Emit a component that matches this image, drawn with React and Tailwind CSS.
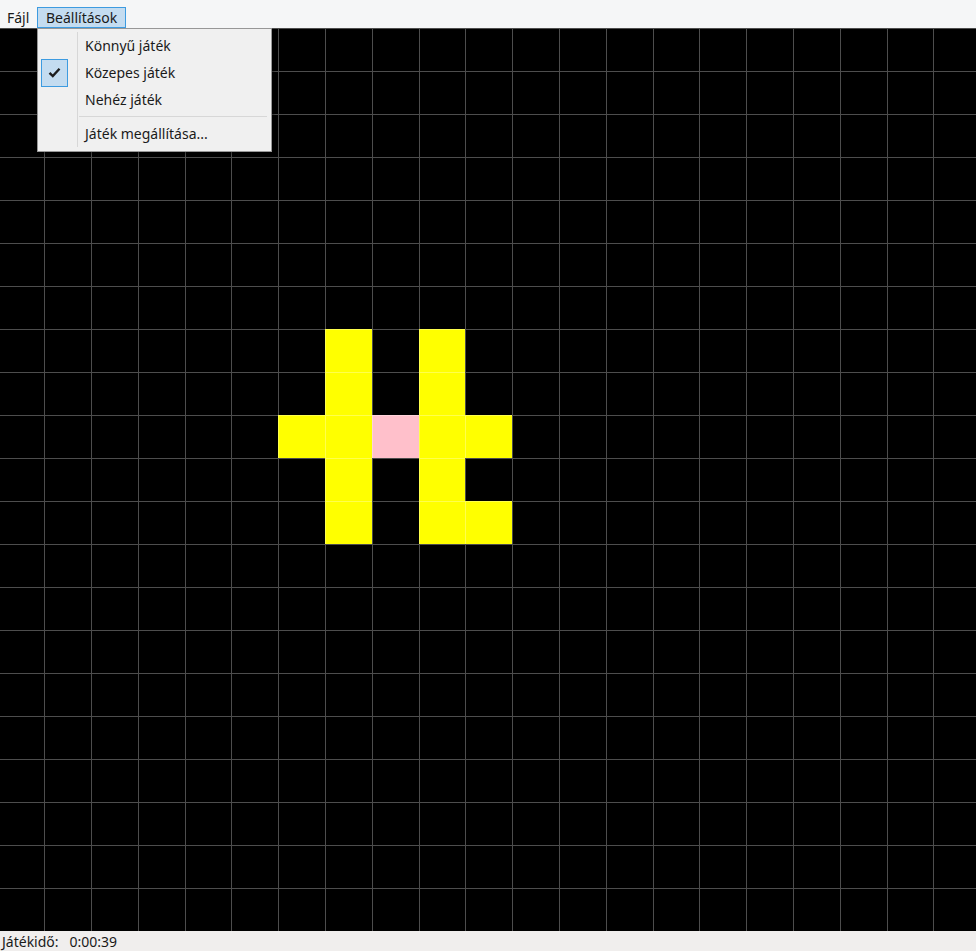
import React from 'react';

const ROWS = 21;
const COLS = 21;

// cell colours keyed by "row-col"
const cells = {
  '7-7': 'y', '7-9': 'y',
  '8-7': 'y', '8-9': 'y',
  '9-6': 'y', '9-7': 'y', '9-8': 'p', '9-9': 'y', '9-10': 'y',
  '10-7': 'y', '10-9': 'y',
  '11-7': 'y', '11-9': 'y', '11-10': 'y',
};

const Board = () => {
  const items = [];
  for (let r = 0; r < ROWS; r++) {
    for (let c = 0; c < COLS; c++) {
      const kind = cells[`${r}-${c}`];
      const bg = kind === 'y' ? 'bg-[#ffff00]' : kind === 'p' ? 'bg-[#ffc0cb]' : 'bg-black';
      items.push(<div key={`${r}-${c}`} className={`${bg} border-l border-t border-white/30`} />);
    }
  }
  return (
    <div className="flex-1 bg-black overflow-hidden">
      <div className="ml-[-2.5px] grid grid-cols-[repeat(21,46.8px)] grid-rows-[repeat(21,43px)]">
        {items}
      </div>
    </div>
  );
};

const MenuItem = ({ label, checked }) => (
  <div className="flex h-[27px] items-center">
    <div className="w-[37px] h-full flex items-center">
      {checked && (
        <div className="ml-[1px] w-[27px] h-[28px] bg-[#c4dcf0] border border-[#3d9be0] flex items-center justify-center">
          <svg width="13" height="11" viewBox="0 0 13 11">
            <path d="M1.5 5.8 L4.8 9 L11.5 1.8" fill="none" stroke="#1e1e1e" strokeWidth="2.4" />
          </svg>
        </div>
      )}
    </div>
    <div className="h-full border-l border-[#d7d7d7] pl-[7px] flex items-center text-[#1a1a1a]">{label}</div>
  </div>
);

export default function App() {
  return (
    <div className="h-[951px] flex flex-col relative text-[14px]" style={{ fontFamily: '"Noto Sans", "Open Sans", sans-serif' }}>
      <div className="h-[28px] bg-[#f5f6f7] flex items-end pl-[1px]">
        <div className="h-[21px] w-[36px] pl-[6px] flex items-center text-[#1a1a1a]">Fájl</div>
        <div className="h-[21px] px-[8px] flex items-center text-[#1a1a1a] bg-[#c4dcf0] border border-[#3d9be0]">Beállítások</div>
      </div>

      <Board />

      <div className="h-[20px] bg-[#f0eeed] flex items-center pl-[2px] text-[#1a1a1a] whitespace-pre">
        Játékidő:   0:00:39
      </div>

      <div className="absolute left-[37px] top-[28px] w-[235px] h-[124px] bg-[#f0f0f0] border border-[#979797] shadow-[2px_2px_2px_rgba(0,0,0,0.35)] p-[3px] pl-[2px]">
        <MenuItem label="Könnyű játék" />
        <MenuItem label="Közepes játék" checked />
        <MenuItem label="Nehéz játék" />
        <div className="flex h-[7px]">
          <div className="w-[37px]" />
          <div className="flex-1 border-l border-[#d7d7d7] flex items-center pl-[1px] pr-[1px]">
            <div className="h-px w-full bg-[#d7d7d7]" />
          </div>
        </div>
        <MenuItem label="Játék megállítása..." />
      </div>
    </div>
  );
}
